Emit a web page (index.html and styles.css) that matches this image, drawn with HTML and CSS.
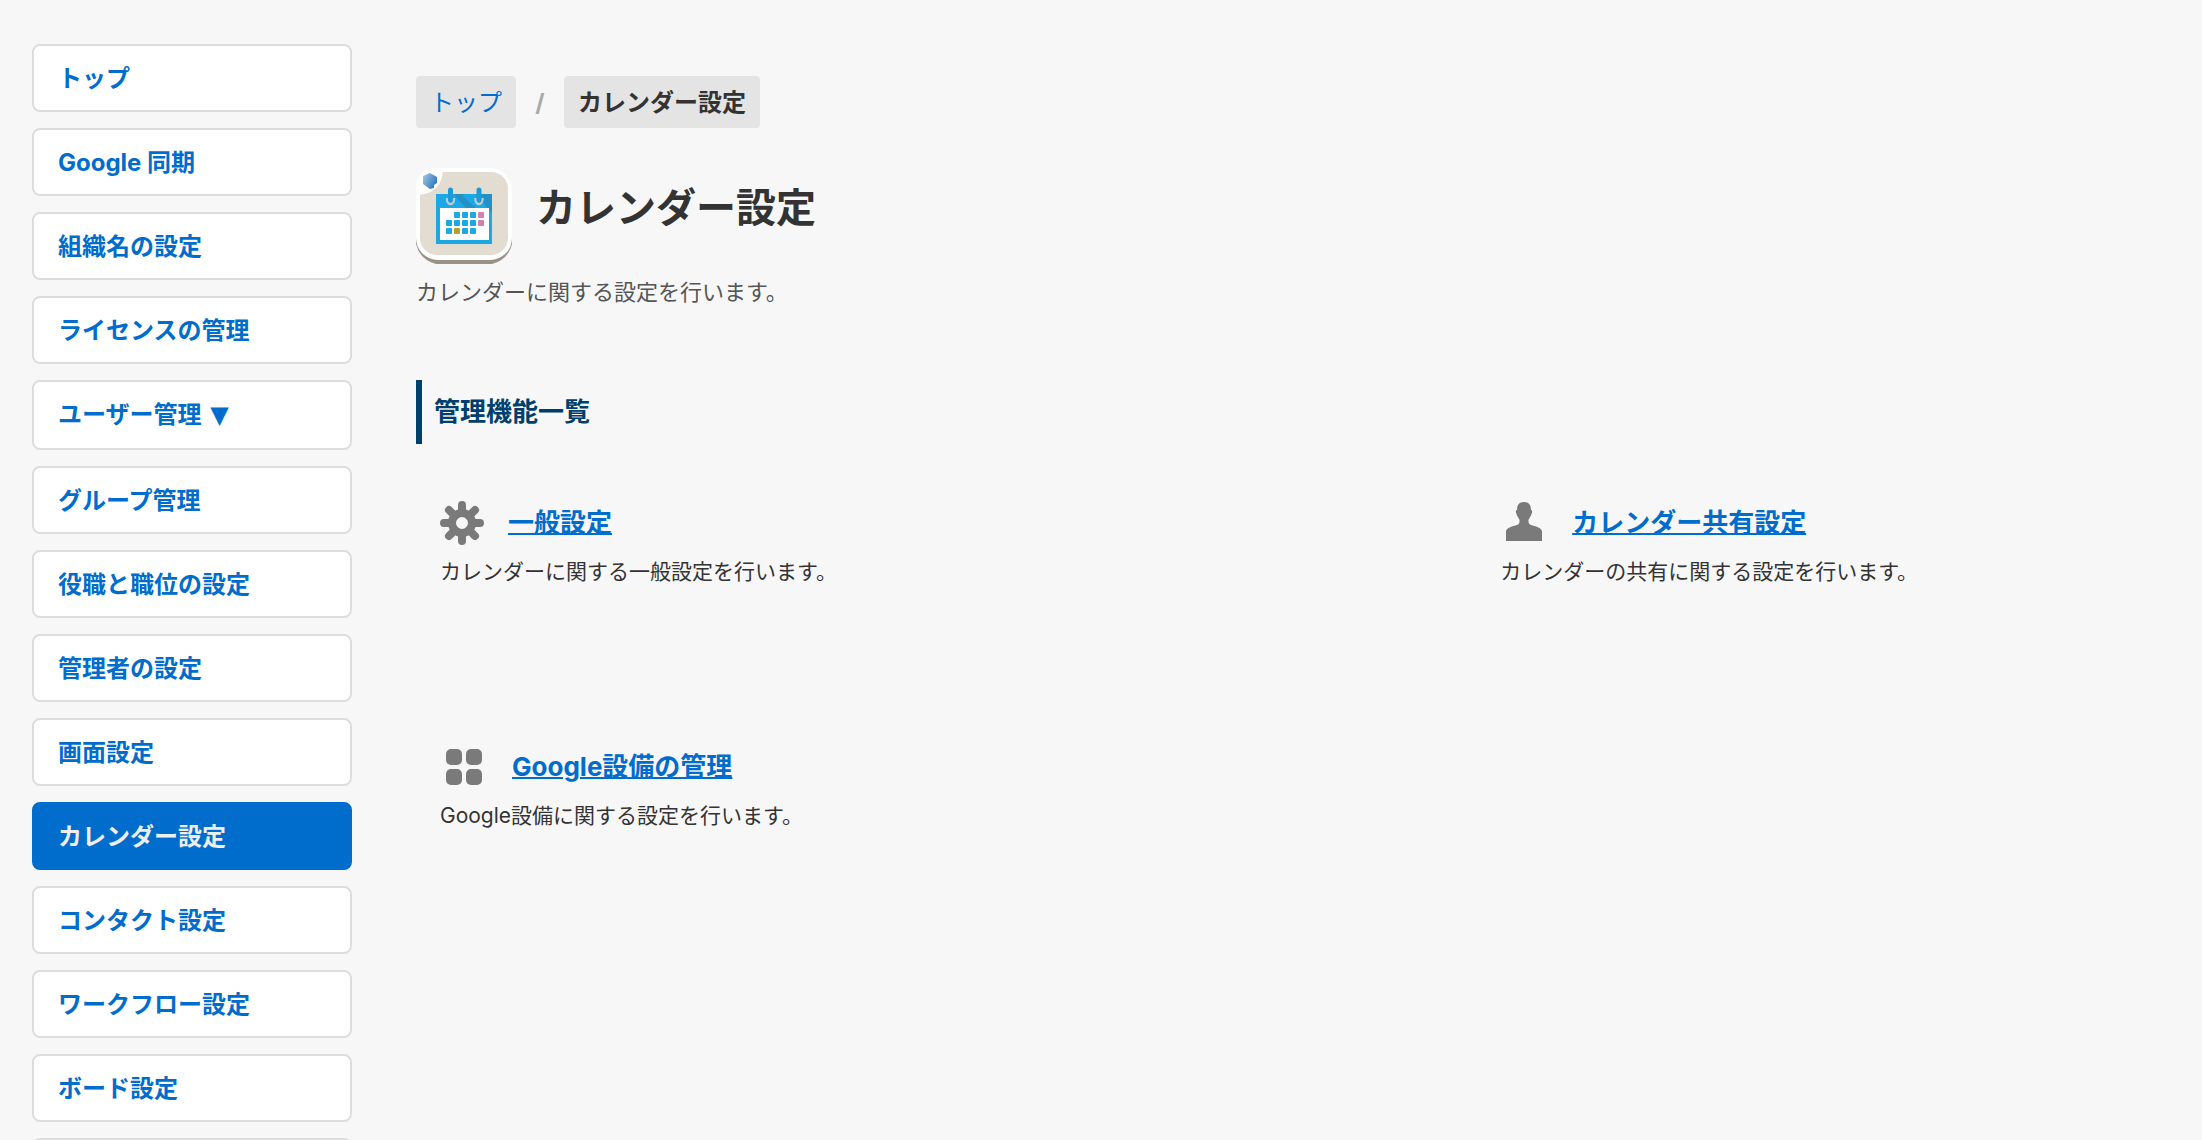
FILE: index.html
```html
<!DOCTYPE html>
<html lang="ja">
<head>
    <meta charset="UTF-8">
    <meta name="viewport" content="width=device-width, initial-scale=1.0">
    <title>カレンダー設定</title>
    <link rel="stylesheet" href="styles.css">
</head>
<body>
    <div class="container">
        <!-- Side menu -->
        <nav class="sidebar">
            <ul class="menu">
                <li><a href="#">トップ</a></li>
                <li><a href="#">Google 同期</a></li>
                <li><a href="#">組織名の設定</a></li>
                <li><a href="#">ライセンスの管理</a></li>
                <li><a href="#" class="has-children">ユーザー管理 <span class="arrow">▼</span></a></li>
                <li><a href="#">グループ管理</a></li>
                <li><a href="#">役職と職位の設定</a></li>
                <li><a href="#">管理者の設定</a></li>
                <li><a href="#">画面設定</a></li>
                <li><a href="#" class="active">カレンダー設定</a></li>
                <li><a href="#">コンタクト設定</a></li>
                <li><a href="#">ワークフロー設定</a></li>
                <li><a href="#">ボード設定</a></li>
                <li class="menu-end"></li>
            </ul>
        </nav>

        <!-- Main content -->
        <main class="main">
            <div class="breadcrumb">
                <a href="#" class="crumb">トップ</a>
                <span class="separator">/</span>
                <span class="crumb current">カレンダー設定</span>
            </div>

            <div class="page-header">
                <svg class="app-icon" viewBox="0 0 96 96" aria-hidden="true">
                    <defs>
                        <linearGradient id="cube" x1="0" y1="0" x2="1" y2="0.6">
                            <stop offset="0" stop-color="#a9cbe8"/>
                            <stop offset="1" stop-color="#2f78bd"/>
                        </linearGradient>
                    </defs>
                    <path d="M0 70V76Q4 92 20 96H76Q92 92 96 76V70z" fill="#989289"/>
                    <rect x="0" y="0" width="96" height="92" rx="22" fill="#fff"/>
                    <rect x="4" y="4" width="88" height="83" rx="17" fill="#e3ddd1"/>
                    <path d="M0 27V18Q2 2 18 0H27Q27 13 20 20T0 27Z" fill="#fff"/>
                    <path d="M7 8l7-3 7 4v6l-3 2v3l-4 1-7-5z" fill="url(#cube)"/>
                    <rect x="20" y="26" width="56" height="50" fill="#1ba9e6"/>
                    <path d="M38 27h22l16 18V26H38zM38 27l12 13H60L46 27z" fill="#2391c5"/>
                    <path d="M48 26h12v10l-4-2z" fill="#1ba9e6"/>
                    <rect x="24" y="40" width="49" height="32" fill="#fff"/>
                    <path d="M31 30q0 6 3.500 6t3.500-6M59.500 30q0 6 3.500 6t3.500-6" fill="none" stroke="#b9cdcf" stroke-width="2.500"/>
                    <path d="M34.500 22v10M63 22v10" stroke="#1c9bd8" stroke-width="5" stroke-linecap="round"/>
                    <g fill="#1ba9e6">
                        <rect x="38" y="44" width="6" height="6" rx="1"/>
                        <rect x="46" y="44" width="6" height="6" rx="1"/>
                        <rect x="54" y="44" width="6" height="6" rx="1"/>
                        <rect x="30" y="52" width="6" height="6" rx="1"/>
                        <rect x="38" y="52" width="6" height="6" rx="1"/>
                        <rect x="46" y="52" width="6" height="6" rx="1"/>
                        <rect x="54" y="52" width="6" height="6" rx="1"/>
                        <rect x="30" y="60" width="6" height="6" rx="1"/>
                        <rect x="46" y="60" width="6" height="6" rx="1"/>
                        <rect x="54" y="60" width="6" height="6" rx="1"/>
                    </g>
                    <rect x="62" y="44" width="6" height="6" rx="1" fill="#d67fae"/>
                    <rect x="62" y="52" width="6" height="6" rx="1" fill="#d67fae"/>
                    <rect x="38" y="60" width="6" height="6" rx="1" fill="#b5a02c"/>
                </svg>
                <h1>カレンダー設定</h1>
            </div>
            <p class="lead">カレンダーに関する設定を行います。</p>

            <h2>管理機能一覧</h2>

            <div class="features">
                <section class="feature">
                    <div class="feature-title">
                        <svg class="icon gear" viewBox="0 0 44 44" aria-hidden="true">
                            <g stroke="#7a7a7a" stroke-width="8" stroke-linecap="round">
                                <path d="M22 4v8M22 32v8M4 22h8M32 22h8M9 9l6 6M29 29l6 6M35 9l-6 6M15 29l-6 6"/>
                            </g>
                            <circle cx="22" cy="22" r="10" fill="none" stroke="#7a7a7a" stroke-width="8"/>
                        </svg>
                        <a href="#">一般設定</a>
                    </div>
                    <p>カレンダーに関する一般設定を行います。</p>
                </section>
                <section class="feature">
                    <div class="feature-title">
                        <svg class="icon" viewBox="0 0 48 48" aria-hidden="true">
                            <path d="M24 3c5 0 7 3 7 8 1.500 0 1.500 2 .5 4-.5 2-1 2.500-1.500 3-.5 1.500-1.500 2.500-1.500 3v2c0 2 2 3 6 4 5 1.500 7.500 3 7.500 6v9H6v-9c0-3 2.500-4.500 7.500-6 4-1 6-2 6-4v-2c0-.5-1-1.500-1.500-3-.5-.5-1-1-1.500-3-1-2-1-4 .5-4 0-5 2-8 7-8z" fill="#7a7a7a"/>
                        </svg>
                        <a href="#">カレンダー共有設定</a>
                    </div>
                    <p>カレンダーの共有に関する設定を行います。</p>
                </section>
                <section class="feature">
                    <div class="feature-title">
                        <svg class="icon" viewBox="0 0 48 48" aria-hidden="true">
                            <g fill="#7a7a7a">
                                <rect x="6" y="6" width="16" height="16" rx="5"/>
                                <rect x="26" y="6" width="16" height="16" rx="5"/>
                                <rect x="6" y="26" width="16" height="16" rx="5"/>
                                <rect x="26" y="26" width="16" height="16" rx="5"/>
                            </g>
                        </svg>
                        <a href="#">Google設備の管理</a>
                    </div>
                    <p>Google設備に関する設定を行います。</p>
                </section>
            </div>
        </main>
    </div>
</body>
</html>
```

FILE: styles.css
```css
* {
    box-sizing: border-box;
}
body {
    margin: 0;
    font-family: Inter, "Noto Sans CJK JP", sans-serif;
    font-size: 22px;
    color: #333;
    background-color: #f7f7f7;
}
a {
    color: #006dcc;
}
h1, h2, p, ul {
    margin: 0;
    padding: 0;
}
.container {
    display: flex;
    height: 100vh;
    overflow: hidden;
}

/* Side menu */
.sidebar {
    flex: 0 0 384px;
    padding: 44px 32px 0;
}
.menu {
    list-style: none;
    display: flex;
    flex-direction: column;
    gap: 16px;
}
.menu a, .menu-end {
    display: block;
    min-height: 68px;
    padding: 13px 24px 11px;
    border: 2px solid #ddd;
    border-radius: 8px;
    background-color: #fff;
    font-size: 24px;
    line-height: 40px;
    font-weight: bold;
    text-decoration: none;
}
.menu a.has-children {
    min-height: 70px;
}
.menu a.active {
    border-color: #006dcc;
    background-color: #006dcc;
    color: #eee;
}
.arrow {
    margin-left: 3px;
    font-family: "DejaVu Sans", sans-serif;
}

/* Main content */
.main {
    flex: 1;
    padding: 76px 48px 0 32px;
}
.breadcrumb {
    display: flex;
    align-items: center;
    margin-bottom: 40px;
    font-size: 24px;
    line-height: 50px;
}
.crumb {
    padding: 2px 14px 0;
    border-radius: 4px;
    background-color: #e4e4e4;
    text-decoration: none;
}
.separator {
    width: 48px;
    padding-top: 2px;
    text-align: center;
    color: #aaa;
    font-weight: bold;
}
.current {
    font-weight: bold;
}
.page-header {
    display: flex;
    gap: 24px;
}
.app-icon {
    width: 96px;
    height: 96px;
}
h1 {
    font-size: 40px;
    line-height: 80px;
}
.lead {
    margin: 8px 0 68px;
    line-height: 40px;
    color: #555;
}
h2 {
    padding: 2px 0 2px 12px;
    border-left: 6px solid #003f6c;
    font-size: 26px;
    line-height: 60px;
    color: #003f6c;
}
.features {
    display: grid;
    grid-template-columns: 61% 39%;
    grid-auto-rows: 244px;
    margin-top: 55px;
}
.feature {
    padding: 0 24px;
}
.feature-title {
    display: flex;
    align-items: center;
    gap: 24px;
    height: 48px;
    margin-bottom: 9px;
    font-size: 26px;
    line-height: 44px;
    font-weight: bold;
}
.feature-title a {
    text-decoration-thickness: 2px;
}
.feature p {
    font-size: 21px;
    line-height: 32px;
}
.icon {
    width: 48px;
    height: 48px;
}
.gear {
    width: 44px;
    height: 44px;
}
```
